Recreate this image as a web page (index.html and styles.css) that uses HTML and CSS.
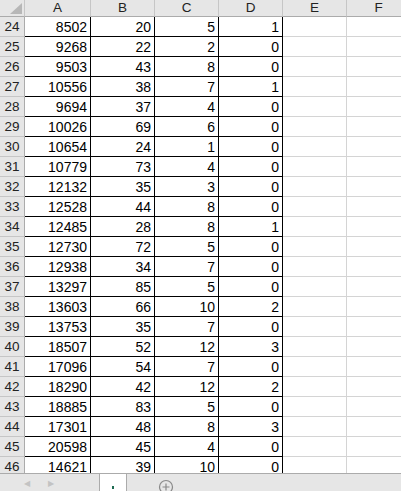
FILE: index.html
```html
<!DOCTYPE html>
<html>
<head>
<meta charset="utf-8">
<link rel="stylesheet" href="styles.css">
</head>
<body>
<div class="app">
  <div class="sheet" id="sheet">
    <div class="corner"><svg width="24" height="16" viewBox="0 0 24 16"><polygon points="22,3 22,14 10,14" fill="#b7b7b7"/></svg></div>
    <div class="colh">A</div><div class="colh">B</div><div class="colh">C</div><div class="colh">D</div><div class="colh">E</div><div class="colh">F</div>
  </div>
  <div class="tabbar">
    <div class="nav">
      <span class="arr">&#9664;</span>
      <span class="arr">&#9654;</span>
    </div>
    <div class="tab"><span class="tabmark"></span></div>
    <div class="addarea">
      <svg class="add" width="16" height="16" viewBox="0 0 16 16"><circle cx="8" cy="8" r="6.5" fill="none" stroke="#8a8a8a" stroke-width="1.2"/><path d="M8 4.5v7M4.5 8h7" stroke="#8a8a8a" stroke-width="1.2"/></svg>
    </div>
  </div>
</div>
<script src="app.js"></script>
</body>
</html>
```

FILE: app.js
```js
var data = [
[24,8502,20,5,1],[25,9268,22,2,0],[26,9503,43,8,0],[27,10556,38,7,1],[28,9694,37,4,0],
[29,10026,69,6,0],[30,10654,24,1,0],[31,10779,73,4,0],[32,12132,35,3,0],[33,12528,44,8,0],
[34,12485,28,8,1],[35,12730,72,5,0],[36,12938,34,7,0],[37,13297,85,5,0],[38,13603,66,10,2],
[39,13753,35,7,0],[40,18507,52,12,3],[41,17096,54,7,0],[42,18290,42,12,2],[43,18885,83,5,0],
[44,17301,48,8,3],[45,20598,45,4,0],[46,14621,39,10,0]
];
var s = document.getElementById('sheet');
var html = '';
data.forEach(function (r) {
  html += '<div class="rowh">' + r[0] + '</div>';
  for (var i = 1; i <= 4; i++) html += '<div class="cell b">' + r[i] + '</div>';
  html += '<div class="cell"></div><div class="cell"></div>';
});
s.insertAdjacentHTML('beforeend', html);
```

FILE: styles.css
```css
html, body { margin: 0; padding: 0; }
body {
  width: 401px; height: 491px; overflow: hidden; background: #fff;
  font-family: "Liberation Sans", Arial, sans-serif; font-size: 14px; color: #000;
}
.app { display: flex; flex-direction: column; height: 491px; }
.sheet {
  flex: 1; overflow: hidden;
  display: grid;
  grid-template-columns: 25px 66px 64px 64px 64px 64px 64px;
  grid-template-rows: 17px;
  grid-auto-rows: 20px;
  align-content: start;
}
.corner, .colh, .rowh, .cell { box-sizing: border-box; }
.corner {
  background: #e6e6e6; border-right: 1px solid #c6c6c6; border-bottom: 1px solid #ababab;
  display: flex; align-items: flex-start;
}
.corner svg { display: block; }
.colh {
  background: #e6e6e6; border-right: 1px solid #c6c6c6; border-bottom: 1px solid #ababab;
  text-align: center; color: #222; line-height: 16px; font-size: 13.5px;
}
.rowh {
  background: #e6e6e6; border-right: 1px solid #ababab; border-bottom: 1px solid #c6c6c6;
  text-align: center; color: #222; line-height: 20px; font-size: 13.5px;
}
.cell {
  border-right: 1px solid #d4d4d4; border-bottom: 1px solid #d4d4d4;
  text-align: right; padding-right: 3px; line-height: 21px;
}
.cell.b { border-right-color: #000; border-bottom-color: #000; }
.tabbar {
  height: 18px; flex: none; display: flex; background: #e6e6e6;
  border-top: 1px solid #ababab; box-sizing: border-box; overflow: hidden;
}
.nav {
  width: 100px; display: flex; gap: 18px; padding-left: 24px; box-sizing: border-box;
  border-right: 1px solid #ababab; align-items: flex-start;
}
.arr { color: #c3c3c3; font-size: 8px; line-height: 8px; margin-top: 6px; }
.tab {
  width: 26px; background: #fff; margin-top: -1px; border-right: 1px solid #ababab;
  position: relative;
}
.tabmark {
  position: absolute; left: 12px; top: 13px; width: 2px; height: 3px; background: #1e6b52;
}
.addarea { flex: 1; position: relative; }
.add { position: absolute; left: 31px; top: 5px; }
```
